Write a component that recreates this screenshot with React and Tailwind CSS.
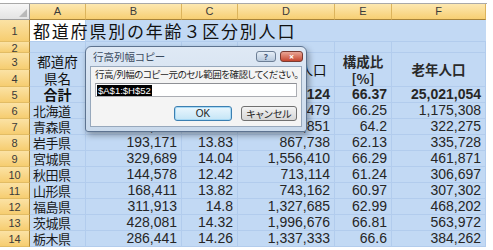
import React from "react";

const JP = "font-['Noto_Sans_CJK_JP',sans-serif]";
const NUM = "font-['Liberation_Sans',sans-serif]";

const hdr =
  "flex items-center justify-center border-r border-b border-[#dcb45c] bg-linear-to-b from-[#fde8b0] to-[#f7cf72] text-[11px] text-[#3a3a3a] font-['Liberation_Sans',sans-serif]";
const rowHdr =
  "flex items-center justify-center border-r border-b border-r-[#b48a35] border-b-[#e2bc64] bg-linear-to-b from-[#fbe2a4] to-[#f6cd70] text-[11px] text-[#3a3a3a] pt-[2px] font-['Liberation_Sans',sans-serif]";
const sel = "border-r border-b border-[#b2cced] bg-[#c2d9f4]";
const num = `${sel} ${NUM} flex items-center justify-end pr-[4px] text-[14px] text-[#262626]`;

const rows = [
  { n: 6, pref: "北海道", b: "657,312", c: "11.94", d: "3,482,479", e: "66.25", f: "1,175,308" },
  { n: 7, pref: "青森県", b: "171,842", c: "12.52", d: "878,851", e: "64.2", f: "322,275" },
  { n: 8, pref: "岩手県", b: "193,171", c: "13.83", d: "867,738", e: "62.13", f: "335,728" },
  { n: 9, pref: "宮城県", b: "329,689", c: "14.04", d: "1,556,410", e: "66.29", f: "461,871" },
  { n: 10, pref: "秋田県", b: "144,578", c: "12.42", d: "713,114", e: "61.24", f: "306,697" },
  { n: 11, pref: "山形県", b: "168,411", c: "13.82", d: "743,162", e: "60.97", f: "307,302" },
  { n: 12, pref: "福島県", b: "311,913", c: "14.8", d: "1,327,685", e: "62.99", f: "468,202" },
  { n: 13, pref: "茨城県", b: "428,081", c: "14.32", d: "1,996,676", e: "66.81", f: "563,972" },
  { n: 14, pref: "栃木県", b: "286,441", c: "14.26", d: "1,337,333", e: "66.6", f: "384,262" },
];

const Dialog = () => (
  <div className="absolute left-[85px] top-[46px] w-[222px] h-[86px] rounded-t-[6px] rounded-b-[3px] border border-[#5d7390] bg-linear-to-b from-[#dfe9f5] to-[#c9d9eb] shadow-[2px_3px_6px_rgba(0,0,0,0.35)]">
    <div className="flex h-[19px] items-center pl-[7px] pr-[3px]">
      <span className={`${JP} text-[10.5px] text-[#3a4a5e] [font-feature-settings:'palt']`}>
        行高列幅コピー
      </span>
      <div className="ml-auto flex items-center gap-[4px]">
        <div className="flex h-[11px] w-[20px] items-center justify-center rounded-[3px] border border-[#6d7f96] bg-linear-to-b from-[#e6eef7] to-[#b7c8dc] text-[8px] font-bold leading-none text-[#3b5170]">
          ?
        </div>
        <div className="flex h-[11px] w-[23px] items-center justify-center rounded-[3px] border border-[#7a3b32] bg-linear-to-b from-[#e9a595] to-[#c5452e] text-[9px] font-bold leading-none text-white">
          ×
        </div>
      </div>
    </div>
    <div className="mx-[4px] h-[61px] border border-[#97a8bc] bg-[#f4f4f4] px-[4px]">
      <div className={`${JP} mt-[1px] h-[13px] whitespace-nowrap text-[9.5px] leading-[13px] tracking-[-0.5px] text-[#1e1e1e] [font-feature-settings:'palt']`}>
        行高/列幅のコピー元のセル範囲を確認してください。
      </div>
      <div className="mt-[2px] flex h-[14px] items-center border border-[#abadb3] border-t-[#8e9095] bg-white pl-[1px]">
        <span className={`${NUM} bg-black px-[1px] text-[9.5px] leading-[11px] text-white`}>$A$1:$H$52</span>
      </div>
      <div className="mt-[9px] flex justify-end gap-[9px]">
        <div className="flex h-[15px] w-[58px] items-center justify-center rounded-[3px] border border-[#3c7fb1] bg-linear-to-b from-[#eaf6fd] to-[#c4e5f6] shadow-[inset_0_0_0_1px_#a7d9f5]">
          <span className={`${NUM} text-[10px] text-[#1e1e1e]`}>OK</span>
        </div>
        <div className="flex h-[15px] w-[56px] items-center justify-center rounded-[3px] border border-[#707070] bg-linear-to-b from-[#f3f3f3] to-[#d6d6d6]">
          <span className={`${JP} text-[10px] leading-none text-[#1e1e1e] [font-feature-settings:'palt']`}>キャンセル</span>
        </div>
      </div>
    </div>
  </div>
);

export default function App() {
  return (
    <div className="relative h-[250px] w-[493px] overflow-hidden bg-white">
      <div className="mt-[3px] w-[487px] border-t border-[#a9a9a9]">
        <div className="grid grid-cols-[30px_56px_96px_56px_97px_57px_94px] grid-rows-[16px_22px_11px_17px_17px_16px_16px_16px_16px_16px_16px_16px_16px_16px_16px]">
          {/* column header row */}
          <div className="relative border-r border-b border-[#9c9c9c] bg-linear-to-b from-[#f7f7f7] to-[#e3e3e3]">
            <div className="absolute bottom-[2px] right-[2px] h-0 w-0 [border-bottom:8px_solid_#b9b9b9] [border-left:8px_solid_transparent]" />
          </div>
          {["A", "B", "C", "D", "E", "F"].map((c) => (
            <div key={c} className={`${hdr} border-b-[#a8843a]`}>{c}</div>
          ))}

          {/* row 1 */}
          <div className={rowHdr}>1</div>
          <div className="relative col-span-6 flex items-center border-b border-[#b2cced] bg-[#c2d9f4]">
            <div className="absolute left-0 top-0 h-full w-[56px] border-r border-[#b2cced] bg-white" />
            <span className={`${JP} relative pl-[3px] text-[17px] tracking-[1.8px] text-[#111]`}>
              都道府県別の年齢３区分別人口
            </span>
          </div>

          {/* row 2 */}
          <div className={rowHdr}>2</div>
          {[0, 1, 2, 3, 4, 5].map((i) => (
            <div key={i} className={sel} />
          ))}

          {/* rows 3-4 header */}
          <div className={rowHdr}>3</div>
          <div className={`${sel} ${JP} row-span-2 flex flex-col items-center justify-center text-[13.5px] leading-[17px] text-[#111]`}>
            <span>都道府</span>
            <span>県名</span>
          </div>
          <div className={`${sel} ${JP} row-span-2 flex items-center justify-center text-[14px] text-[#111]`}>年少人口</div>
          <div className={`${sel} ${JP} row-span-2 flex flex-col items-center justify-center text-[14px] leading-[17px] text-[#111]`}>
            <span>構成比</span>
            <span>[%]</span>
          </div>
          <div className={`${sel} ${JP} row-span-2 flex items-center justify-center text-[13.5px] text-[#111]`}>生産年齢人口</div>
          <div className={`${sel} ${JP} row-span-2 flex flex-col items-center justify-center text-[13.5px] font-bold leading-[17px] text-[#2a2a2a]`}>
            <span>構成比</span>
            <span>[%]</span>
          </div>
          <div className={`${sel} ${JP} row-span-2 flex items-center justify-center text-[13.5px] font-bold text-[#2a2a2a]`}>老年人口</div>
          <div className={rowHdr}>4</div>

          {/* row 5 totals */}
          <div className={rowHdr}>5</div>
          <div className={`${sel} ${JP} flex items-center justify-center text-[14px] font-bold text-[#111]`}>合計</div>
          <div className={`${num} font-bold`}>16,803,444</div>
          <div className={`${num} font-bold`}>13.24</div>
          <div className={`${num} font-bold`}>81,031,124</div>
          <div className={`${num} font-bold`}>66.37</div>
          <div className={`${num} font-bold`}>25,021,054</div>

          {rows.map((r) => (
            <React.Fragment key={r.n}>
              <div className={rowHdr}>{r.n}</div>
              <div className={`${sel} ${JP} flex items-center pl-[3px] text-[13px] tracking-[-0.5px] text-[#1a1a1a]`}>{r.pref}</div>
              <div className={num}>{r.b}</div>
              <div className={num}>{r.c}</div>
              <div className={num}>{r.d}</div>
              <div className={num}>{r.e}</div>
              <div className={num}>{r.f}</div>
            </React.Fragment>
          ))}
        </div>
      </div>
      <Dialog />
    </div>
  );
}
